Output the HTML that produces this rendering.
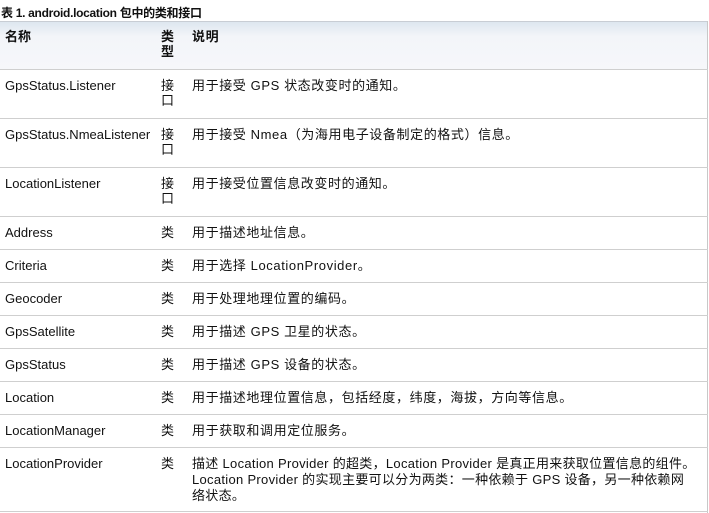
<!DOCTYPE html>
<html><head><meta charset="utf-8"><style>
body{margin:0;width:709px;height:513px;background:#fff;position:relative;overflow:hidden;font-family:"Liberation Sans","Noto Sans CJK SC",sans-serif;font-size:13px;color:#111}
.t{position:absolute;left:1px;top:4px;font-weight:bold;font-size:12px;letter-spacing:-0.3px}
.hd{position:absolute;left:0;top:21px;width:708px;height:48px;background:linear-gradient(#dde6ef,#f3f5f9 30%,#f6f7fa);border-top:1px solid #c8cdd4}
.l{position:absolute;left:0;width:708px;border-top:1px solid #cfcfcf}
.v{position:absolute;left:707px;top:21px;height:492px;border-left:1px solid #c8c8c8}
.c{position:absolute;line-height:16px;white-space:nowrap}
.n{left:5px}.k{left:161px;width:14px;white-space:normal;line-height:15px}.d{left:192px;letter-spacing:0.6px}
b{font-weight:bold}
</style></head><body>
<div class="t">表 1. android.location 包中的类和接口</div>
<div class="hd"></div>
<div class="v"></div>
<div class="c n" style="top:29px"><b>名称</b></div>
<div class="c k" style="top:29px"><b>类型</b></div>
<div class="c d" style="top:29px"><b>说明</b></div>
<div class="l" style="top:69px"></div>
<div class="c n" style="top:78px">GpsStatus.Listener</div><div class="c k" style="top:78px">接口</div><div class="c d" style="top:78px">用于接受 GPS 状态改变时的通知。</div>
<div class="l" style="top:118px"></div>
<div class="c n" style="top:127px">GpsStatus.NmeaListener</div><div class="c k" style="top:127px">接口</div><div class="c d" style="top:127px">用于接受 Nmea（为海用电子设备制定的格式）信息。</div>
<div class="l" style="top:167px"></div>
<div class="c n" style="top:176px">LocationListener</div><div class="c k" style="top:176px">接口</div><div class="c d" style="top:176px">用于接受位置信息改变时的通知。</div>
<div class="l" style="top:216px"></div>
<div class="c n" style="top:225px">Address</div><div class="c k" style="top:225px">类</div><div class="c d" style="top:225px">用于描述地址信息。</div>
<div class="l" style="top:249px"></div>
<div class="c n" style="top:258px">Criteria</div><div class="c k" style="top:258px">类</div><div class="c d" style="top:258px">用于选择 LocationProvider。</div>
<div class="l" style="top:282px"></div>
<div class="c n" style="top:291px">Geocoder</div><div class="c k" style="top:291px">类</div><div class="c d" style="top:291px">用于处理地理位置的编码。</div>
<div class="l" style="top:315px"></div>
<div class="c n" style="top:324px">GpsSatellite</div><div class="c k" style="top:324px">类</div><div class="c d" style="top:324px">用于描述 GPS 卫星的状态。</div>
<div class="l" style="top:348px"></div>
<div class="c n" style="top:357px">GpsStatus</div><div class="c k" style="top:357px">类</div><div class="c d" style="top:357px">用于描述 GPS 设备的状态。</div>
<div class="l" style="top:381px"></div>
<div class="c n" style="top:390px">Location</div><div class="c k" style="top:390px">类</div><div class="c d" style="top:390px">用于描述地理位置信息，包括经度，纬度，海拔，方向等信息。</div>
<div class="l" style="top:414px"></div>
<div class="c n" style="top:423px">LocationManager</div><div class="c k" style="top:423px">类</div><div class="c d" style="top:423px">用于获取和调用定位服务。</div>
<div class="l" style="top:447px"></div>
<div class="c n" style="top:456px">LocationProvider</div><div class="c k" style="top:456px">类</div><div class="c d" style="top:456px;letter-spacing:0.3px">描述 Location Provider 的超类，Location Provider 是真正用来获取位置信息的组件。<br>Location Provider 的实现主要可以分为两类：一种依赖于 GPS 设备，另一种依赖网<br>络状态。</div>
<div class="l" style="top:511px"></div>
</body></html>
